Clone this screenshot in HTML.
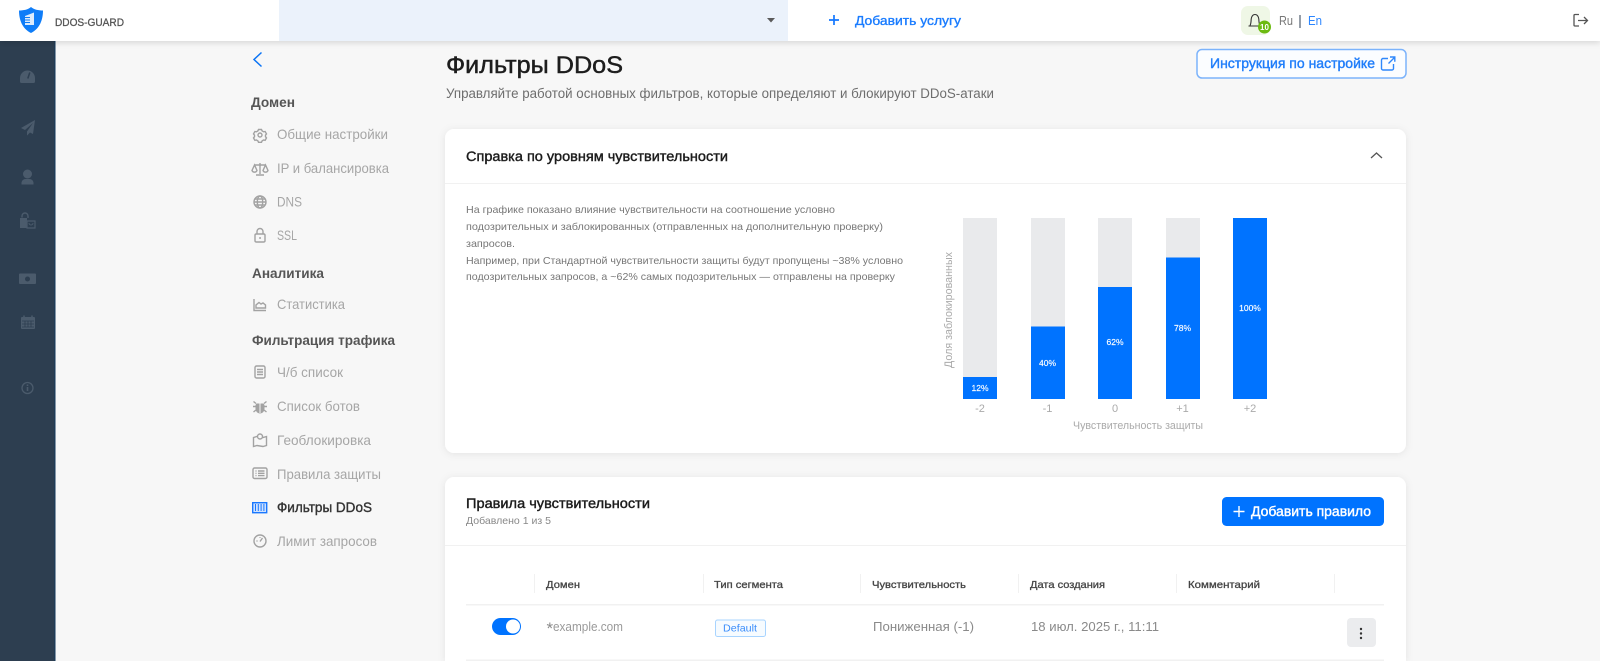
<!DOCTYPE html>
<html lang="ru">
<head>
<meta charset="utf-8">
<title>Фильтры DDoS</title>
<style>
html,body{margin:0;padding:0;width:1600px;height:661px;overflow:hidden;background:#f7f7f7}
svg.page{display:block;position:absolute;left:0;top:0;filter:blur(.3px)}
text{font-family:"Liberation Sans","Noto Sans CJK SC",sans-serif;white-space:pre}
.nav{font-size:14px;fill:#a6a6a6}
.grp{font-size:13.5px;font-weight:bold;fill:#555}
.p{font-size:10.5px;fill:#777}
.th{font-size:10.5px;fill:#444;stroke:#444;stroke-width:.3}
.td{font-size:13px;fill:#8a8a8a}
.tk{font-size:11px;fill:#aaa}
.pc{font-size:8.5px;fill:#fff;text-anchor:middle;stroke:#fff;stroke-width:.15}
.ic{fill:none;stroke:#a2a2a2;stroke-width:1.4}
.si{fill:#4b5b6c}
</style>
</head>
<body>
<svg class="page" width="1600" height="661" viewBox="0 0 1600 661" xmlns="http://www.w3.org/2000/svg">
<defs>
<filter id="hs" x="-5%" y="-50%" width="110%" height="200%"><feDropShadow dx="0" dy="2" stdDeviation="3" flood-color="#000" flood-opacity=".13"/></filter>
<filter id="cs" x="-5%" y="-10%" width="110%" height="120%"><feDropShadow dx="0" dy="1" stdDeviation="4" flood-color="#000" flood-opacity=".08"/></filter>
</defs>

<rect width="1600" height="661" fill="#f7f7f7"/>

<!-- left rail -->
<rect x="0" y="41" width="55" height="620" fill="#2d3e50"/>
<rect x="54.500" y="41" width="1" height="620" fill="#14395c"/>
<path class="si" d="M20 81.500v-3.500a7.500 7.500 0 0 1 15 0v3.500a1.500 1.500 0 0 1-1.500 1.500h-12a1.500 1.500 0 0 1-1.500-1.500z"/>
<path d="M29.800 72.500l-2 6" stroke="#2d3e50" stroke-width="1.500" fill="none"/>
<path class="si" d="M35 120l-14 8 4 2 8-7-6 8.500v4l3-3 3 1.500z"/>
<circle class="si" cx="27.500" cy="174" r="4.500"/>
<path class="si" d="M21.500 184.500v-2a4 4 0 0 1 4-3.500h4a4 4 0 0 1 4 3.500v2z"/>
<path class="si" d="M20 218h7v3h8v7H20z"/>
<path d="M22 217.500v-1.500a3 3 0 0 1 6 0v2" stroke="#4b5b6c" stroke-width="1.400" fill="none"/>
<path d="M27 221h8v7h-8z" fill="#2d3e50" stroke="#4b5b6c" stroke-width="1.200"/>
<path d="M29 223a2 2 0 0 0 4 0" stroke="#4b5b6c" stroke-width="1" fill="none"/>
<rect class="si" x="19" y="273.500" width="17" height="10.500" rx="1"/>
<circle cx="27.500" cy="279" r="2.500" fill="#2d3e50"/>
<path class="si" d="M22 317h12a1 1 0 0 1 1 1v10a1 1 0 0 1-1 1H22a1 1 0 0 1-1-1v-10a1 1 0 0 1 1-1z"/>
<path d="M24 315.500v2.500M32 315.500v2.500" stroke="#4b5b6c" stroke-width="1.500"/>
<path d="M22 321h12M22 324h12M22 327h12M25 321v6M28 321v6M31 321v6" stroke="#2d3e50" stroke-width=".8"/>
<circle cx="27.500" cy="388" r="5.500" fill="none" stroke="#4b5b6c" stroke-width="1.300"/>
<rect class="si" x="26.700" y="387" width="1.600" height="4"/>
<rect class="si" x="26.700" y="384.500" width="1.600" height="1.500"/>

<!-- top bar -->
<rect x="0" y="0" width="1600" height="41" fill="#fff" filter="url(#hs)"/>
<path d="M31 7c3 2.500 7 3.500 12 3.500 0 9-3 18-12 22.500-9-4.500-12-13.500-12-22.500 5 0 9-1 12-3.500z" fill="#0f7df8"/>
<path d="M25 16l9-3.500V25h-9z" fill="#dcebfc"/>
<path d="M25 17.500h5M25 20h5M25 22.500h5" stroke="#0f7df8" stroke-width=".9"/>
<text x="55" y="26" font-size="11" fill="#555" stroke="#555" stroke-width=".3" textLength="69" lengthAdjust="spacingAndGlyphs">DDOS-GUARD</text>
<rect x="279" y="0" width="509" height="41" fill="#ebf2fb"/>
<path d="M767 18h8l-4 4.500z" fill="#5a5a5a"/>
<path d="M829 20h10M834 15v10" stroke="#1478ff" stroke-width="1.700"/>
<text x="855" y="25" font-size="13" fill="#1a7cff" stroke="#1a7cff" stroke-width=".35" textLength="106" lengthAdjust="spacingAndGlyphs">Добавить услугу</text>
<rect x="1241" y="6" width="29" height="29" rx="7" fill="#eff7e6"/>
<path d="M1248.500 26h11M1250 25.500c1.200-2 1-4.500 1.200-6.500.2-2.200 1.500-4.500 3.800-4.500s3.600 2.300 3.800 4.500c.2 2 0 4.500 1.200 6.500" fill="none" stroke="#333" stroke-width="1.100"/>
<circle cx="1264.500" cy="27" r="6.500" fill="#6cba10"/>
<text x="1264.500" y="30" font-size="8" font-weight="bold" fill="#fff" text-anchor="middle">10</text>
<text x="1279" y="25" font-size="13" fill="#777" textLength="14" lengthAdjust="spacingAndGlyphs">Ru</text>
<rect x="1299.500" y="15" width="1" height="13" fill="#2d3e50"/>
<text x="1308" y="25" font-size="13" fill="#2c86ff" textLength="14" lengthAdjust="spacingAndGlyphs">En</text>
<path d="M1579 14.500h-4a1 1 0 0 0-1 1v9.500a1 1 0 0 0 1 1h4M1578 20.500h9M1584 17l3.500 3.500-3.500 3.500" fill="none" stroke="#555" stroke-width="1.300"/>

<!-- back -->
<path d="M261.500 52.500l-7.500 7 7.500 7" fill="none" stroke="#0b74f5" stroke-width="1.500"/>

<!-- side nav -->
<text class="grp" x="251" y="107" textLength="44" lengthAdjust="spacingAndGlyphs">Домен</text>
<text class="nav" x="277" y="139" textLength="111" lengthAdjust="spacingAndGlyphs">Общие настройки</text>
<text class="nav" x="277" y="173" textLength="112" lengthAdjust="spacingAndGlyphs">IP и балансировка</text>
<text class="nav" x="277" y="206.500" textLength="25" lengthAdjust="spacingAndGlyphs">DNS</text>
<text class="nav" x="277" y="240" textLength="20" lengthAdjust="spacingAndGlyphs">SSL</text>
<text class="grp" x="252" y="278" textLength="72" lengthAdjust="spacingAndGlyphs">Аналитика</text>
<text class="nav" x="277" y="309" textLength="68" lengthAdjust="spacingAndGlyphs">Статистика</text>
<text class="grp" x="252" y="345" textLength="143" lengthAdjust="spacingAndGlyphs">Фильтрация трафика</text>
<text class="nav" x="277" y="377" textLength="66" lengthAdjust="spacingAndGlyphs">Ч/б список</text>
<text class="nav" x="277" y="411" textLength="83" lengthAdjust="spacingAndGlyphs">Список ботов</text>
<text class="nav" x="277" y="445" textLength="94" lengthAdjust="spacingAndGlyphs">Геоблокировка</text>
<text class="nav" x="277" y="479" textLength="104" lengthAdjust="spacingAndGlyphs">Правила защиты</text>
<text x="277" y="512" font-size="14" fill="#333" stroke="#333" stroke-width=".4" textLength="95" lengthAdjust="spacingAndGlyphs">Фильтры DDoS</text>
<text class="nav" x="277" y="546" textLength="100" lengthAdjust="spacingAndGlyphs">Лимит запросов</text>

<!-- nav icons -->
<circle class="ic" cx="260" cy="135" r="2"/>
<path class="ic" d="M258.500 129.500h3l.6 1.400 1.500.9 1.500-.3 1.400 2.400-1 1.200v1.600l1 1.200-1.400 2.400-1.500-.3-1.500.9-.6 1.400h-3l-.6-1.400-1.500-.9-1.500.3-1.400-2.400 1-1.200v-1.600l-1-1.200 1.400-2.400 1.500.3 1.500-.9z"/>
<path class="ic" d="M260 163v11M256 175h8M254 165h12M254.500 165l-2.500 5.500a2.700 2.700 0 0 0 5 0zM265.500 165l-2.500 5.500a2.700 2.700 0 0 0 5 0z"/>
<circle class="ic" cx="260" cy="202" r="6"/>
<ellipse class="ic" cx="260" cy="202" rx="2.700" ry="6"/>
<path class="ic" d="M254 202h12M255 199h10M255 205h10"/>
<rect class="ic" x="255" y="234" width="10" height="8" rx="1.200"/>
<path class="ic" d="M257 234v-2.500a3 3 0 0 1 6 0v2.500"/>
<rect x="259.300" y="237" width="1.500" height="2" fill="#a6a6a6"/>
<path class="ic" d="M254 299v11.500h12M256 308v-3l3-2.500 2 1.500 2-1 2.500 2v3z"/>
<rect class="ic" x="255" y="366" width="10" height="12" rx="1.500" stroke-width="1.800"/>
<path class="ic" d="M257 369.500h6M257 372h6M257 374.500h6"/>
<path d="M256.500 403.500h7l1 1.500v4a4.500 4.500 0 0 1-9 0v-4z" fill="#a2a2a2"/>
<path class="ic" d="M253.500 401.500l2.500 2M266.500 401.500l-2.500 2M253 406.500h3M267 406.500h-3M253.500 412l2.500-2M266.500 412l-2.500-2"/>
<path d="M260 403v10" stroke="#f7f7f7" stroke-width="1"/>
<path class="ic" d="M253.500 437.500l3.500-1 6 1 3.500-1v9l-3.500 1-6-1-3.500 1z"/>
<circle class="ic" cx="260" cy="436.500" r="2.500" fill="#f7f7f7" style="fill:#f7f7f7"/>
<rect class="ic" x="253" y="468" width="14" height="10.500" rx="1.500" stroke-width="1.700"/>
<path class="ic" d="M255.500 471h1M255.500 473.300h1M255.500 475.600h1M258 471h6.500M258 473.300h6.500M258 475.600h6.500"/>
<rect x="252.700" y="502.700" width="14" height="10" fill="#cfe2ff" stroke="#1a78ff" stroke-width="1.400"/>
<path d="M255.500 504v7M258.300 504v7M261.100 504v7M263.900 504v7" stroke="#1a78ff" stroke-width="1"/>
<circle class="ic" cx="260" cy="541" r="6"/>
<path class="ic" d="M260 541.500l2.500-3.500M256.500 541h1M260 537v.8"/>

<!-- heading -->
<text x="446" y="73" font-size="24" fill="#1d1d1d" stroke="#1d1d1d" stroke-width=".45" textLength="177" lengthAdjust="spacingAndGlyphs">Фильтры DDoS</text>
<text x="446" y="98" font-size="13.500" fill="#6e6e6e" textLength="548" lengthAdjust="spacingAndGlyphs">Управляйте работой основных фильтров, которые определяют и блокируют DDoS-атаки</text>
<rect x="1197" y="49.500" width="209" height="28.500" rx="5" fill="#fbfdff" stroke="#7cb3fb" stroke-width="1.500"/>
<text x="1210" y="68" font-size="14" fill="#1f7dfa" stroke="#1f7dfa" stroke-width=".4" textLength="165" lengthAdjust="spacingAndGlyphs">Инструкция по настройке</text>
<path d="M1388 58.500h-5a1.500 1.500 0 0 0-1.500 1.500v8.500a1.500 1.500 0 0 0 1.500 1.500h9a1.500 1.500 0 0 0 1.500-1.500V64M1388.500 63.500l6-6M1390 57h4.800v4.800" fill="none" stroke="#2f88fb" stroke-width="1.400"/>

<!-- card 1 -->
<rect x="445" y="129" width="961" height="324" rx="9" fill="#fff" filter="url(#cs)"/>
<rect x="445" y="183" width="961" height="1" fill="#f1f1f1"/>
<text x="466" y="161" font-size="13.500" fill="#1c1c1c" stroke="#1c1c1c" stroke-width=".4" textLength="262" lengthAdjust="spacingAndGlyphs">Справка по уровням чувствительности</text>
<path d="M1371 158l5.500-5 5.500 5" fill="none" stroke="#555" stroke-width="1.300"/>
<text class="p" x="466" y="213" textLength="369" lengthAdjust="spacingAndGlyphs">На графике показано влияние чувствительности на соотношение условно</text>
<text class="p" x="466" y="230" textLength="417" lengthAdjust="spacingAndGlyphs">подозрительных и заблокированных (отправленных на дополнительную проверку)</text>
<text class="p" x="466" y="247" textLength="49" lengthAdjust="spacingAndGlyphs">запросов.</text>
<text class="p" x="466" y="264" textLength="437" lengthAdjust="spacingAndGlyphs">Например, при Стандартной чувствительности защиты будут пропущены ~38% условно</text>
<text class="p" x="466" y="280" textLength="429" lengthAdjust="spacingAndGlyphs">подозрительных запросов, а ~62% самых подозрительных — отправлены на проверку</text>

<!-- chart -->
<rect x="963" y="218" width="34" height="181" fill="#e9eaec"/>
<rect x="1031" y="218" width="34" height="181" fill="#e9eaec"/>
<rect x="1098" y="218" width="34" height="181" fill="#e9eaec"/>
<rect x="1166" y="218" width="34" height="181" fill="#e9eaec"/>
<rect x="963" y="377" width="34" height="22" fill="#0073ff"/>
<rect x="1031" y="326.500" width="34" height="72.500" fill="#0073ff"/>
<rect x="1098" y="287" width="34" height="112" fill="#0073ff"/>
<rect x="1166" y="257.500" width="34" height="141.500" fill="#0073ff"/>
<rect x="1233" y="218" width="34" height="181" fill="#0073ff"/>
<text class="pc" x="980" y="391">12%</text>
<text class="pc" x="1047.500" y="366">40%</text>
<text class="pc" x="1115" y="345">62%</text>
<text class="pc" x="1182.500" y="331">78%</text>
<text class="pc" x="1250" y="311">100%</text>
<text class="tk" x="980" y="412" text-anchor="middle">-2</text>
<text class="tk" x="1047.500" y="412" text-anchor="middle">-1</text>
<text class="tk" x="1115" y="412" text-anchor="middle">0</text>
<text class="tk" x="1182.500" y="412" text-anchor="middle">+1</text>
<text class="tk" x="1250" y="412" text-anchor="middle">+2</text>
<text class="tk" x="1073" y="429" textLength="130" lengthAdjust="spacingAndGlyphs">Чувствительность защиты</text>
<text class="tk" transform="translate(952 368) rotate(-90)" textLength="116" lengthAdjust="spacingAndGlyphs">Доля заблокированных</text>

<!-- card 2 (continues below the viewport in the original page) -->
<path d="M445 661V486a9 9 0 0 1 9-9h943a9 9 0 0 1 9 9v175z" fill="#fff" filter="url(#cs)"/>
<rect x="445" y="545" width="961" height="1" fill="#f1f1f1"/>
<text x="466" y="508" font-size="13.500" fill="#1c1c1c" stroke="#1c1c1c" stroke-width=".4" textLength="184" lengthAdjust="spacingAndGlyphs">Правила чувствительности</text>
<text x="466" y="524" font-size="10.500" fill="#888" textLength="85" lengthAdjust="spacingAndGlyphs">Добавлено 1 из 5</text>
<rect x="1222" y="497" width="162" height="29" rx="4.500" fill="#0073ff"/>
<path d="M1233.500 511.500h11M1239 506v11" stroke="#fff" stroke-width="1.400"/>
<text x="1251" y="516" font-size="13.500" fill="#fff" stroke="#fff" stroke-width=".4" textLength="120" lengthAdjust="spacingAndGlyphs">Добавить правило</text>

<!-- table -->
<g fill="#f1f1f1">
<rect x="534" y="574" width="1" height="19"/>
<rect x="703" y="574" width="1" height="19"/>
<rect x="860" y="574" width="1" height="19"/>
<rect x="1018" y="574" width="1" height="19"/>
<rect x="1176" y="574" width="1" height="19"/>
<rect x="1334" y="574" width="1" height="19"/>
<rect x="466" y="604" width="918" height="1.500"/>
<rect x="466" y="659.500" width="918" height="1.500"/>
</g>
<text class="th" x="546" y="588" textLength="34" lengthAdjust="spacingAndGlyphs">Домен</text>
<text class="th" x="714" y="588" textLength="69" lengthAdjust="spacingAndGlyphs">Тип сегмента</text>
<text class="th" x="872" y="588" textLength="94" lengthAdjust="spacingAndGlyphs">Чувствительность</text>
<text class="th" x="1030" y="588" textLength="75" lengthAdjust="spacingAndGlyphs">Дата создания</text>
<text class="th" x="1188" y="588" textLength="72" lengthAdjust="spacingAndGlyphs">Комментарий</text>

<rect x="492" y="618" width="29" height="17" rx="8.500" fill="#0073ff"/>
<circle cx="513" cy="626.500" r="7" fill="#fff"/>
<text x="546.500" y="634" font-size="17" fill="#8a8a8a">*</text>
<text x="553" y="631" font-size="12.500" fill="#9a9a9a" textLength="70" lengthAdjust="spacingAndGlyphs">example.com</text>
<rect x="715.500" y="620" width="50" height="16.500" rx="2" fill="#f6fbff" stroke="#a8d4ff" stroke-width="1"/>
<text x="723" y="631.500" font-size="10.500" fill="#3a8dfb" textLength="34" lengthAdjust="spacingAndGlyphs">Default</text>
<text class="td" x="873" y="631" textLength="101" lengthAdjust="spacingAndGlyphs">Пониженная (-1)</text>
<text class="td" x="1031" y="631" textLength="128" lengthAdjust="spacingAndGlyphs">18 июл. 2025 г., 11:11</text>
<rect x="1347" y="618" width="29" height="29" rx="4" fill="#ebecee"/>
<circle cx="1361" cy="629" r="1.200" fill="#333"/>
<circle cx="1361" cy="633.500" r="1.200" fill="#333"/>
<circle cx="1361" cy="638" r="1.200" fill="#333"/>
</svg>
</body>
</html>
